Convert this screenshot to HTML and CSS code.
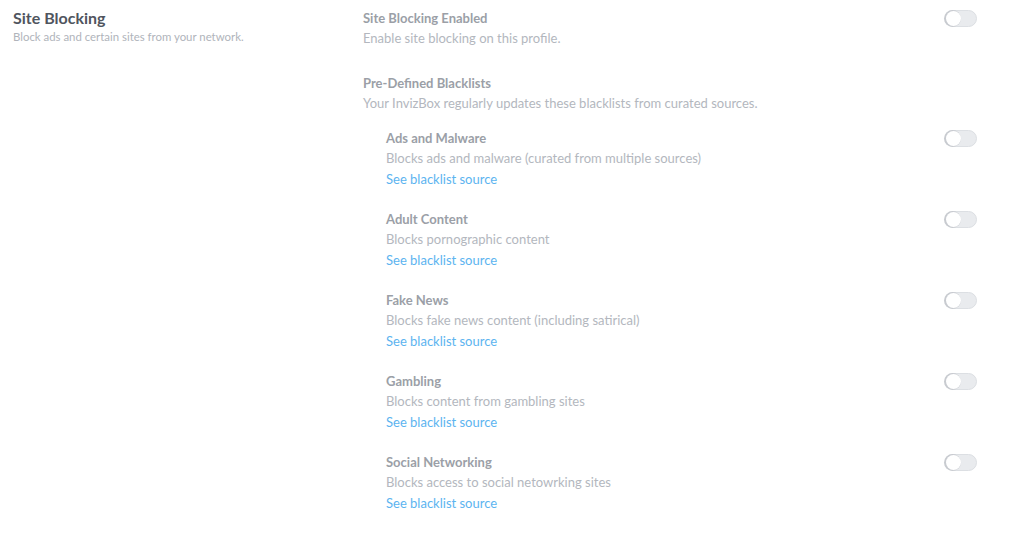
FILE: index.html
```html
<!DOCTYPE html>
<html lang="en">
<head>
  <meta charset="UTF-8">
  <title>Site Blocking</title>
  <link rel="stylesheet" href="styles.css">
</head>
<body>

  <div class="page">
    <div class="side">
      <h2>Site Blocking</h2>
      <p>Block ads and certain sites from your network.</p>
    </div>

    <div class="main">
      <div class="row">
        <div class="text">
          <h4>Site Blocking Enabled</h4>
          <p>Enable site blocking on this profile.</p>
        </div>
        <span class="toggle"></span>
      </div>

      <div class="group">
        <h4>Pre-Defined Blacklists</h4>
        <p>Your InvizBox regularly updates these blacklists from curated sources.</p>
      </div>

      <div class="lists">
        <div class="row item">
          <div class="text">
            <h4>Ads and Malware</h4>
            <p>Blocks ads and malware (curated from multiple sources)</p>
            <a href="#">See blacklist source</a>
          </div>
          <span class="toggle"></span>
        </div>
        <div class="row item">
          <div class="text">
            <h4>Adult Content</h4>
            <p>Blocks pornographic content</p>
            <a href="#">See blacklist source</a>
          </div>
          <span class="toggle"></span>
        </div>
        <div class="row item">
          <div class="text">
            <h4>Fake News</h4>
            <p>Blocks fake news content (including satirical)</p>
            <a href="#">See blacklist source</a>
          </div>
          <span class="toggle"></span>
        </div>
        <div class="row item">
          <div class="text">
            <h4>Gambling</h4>
            <p>Blocks content from gambling sites</p>
            <a href="#">See blacklist source</a>
          </div>
          <span class="toggle"></span>
        </div>
        <div class="row item">
          <div class="text">
            <h4>Social Networking</h4>
            <p>Blocks access to social netowrking sites</p>
            <a href="#">See blacklist source</a>
          </div>
          <span class="toggle"></span>
        </div>
      </div>
    </div>
  </div>

</body>
</html>
```

FILE: styles.css
```css
body { margin: 0; font-family: Lato, "Liberation Sans", sans-serif; background: #fff; }
h2, h4, p { margin: 0; }
.page { display: flex; padding: 8px 47px 0 13px; }
.side { width: 350px; }
.side h2 { font-size: 16px; font-weight: 700; color: #50555e; line-height: 20px; }
.side p { font-size: 11.4px; color: #b0b4bb; line-height: 18px; }
.main { flex: 1; }
.row { display: flex; justify-content: space-between; align-items: flex-start; }
.text h4 { font-size: 13px; font-weight: 700; color: #9b9fa7; line-height: 20px; }
.text p, .group p { font-size: 13px; color: #b3b7be; line-height: 20px; }
.group { margin-top: 25px; }
.group h4 { font-size: 13px; font-weight: 700; color: #9b9fa7; line-height: 20px; }
.lists { padding-left: 23px; margin-top: 15px; }
.item { margin-bottom: 20px; }
a { font-size: 13px; color: #5cb4f0; text-decoration: none; line-height: 20px; }
.toggle {
  width: 32px;
  height: 17px;
  border-radius: 9px;
  background: #e9ebee;
  border: 1px solid #dcdfe3;
  box-sizing: border-box;
  position: relative;
  margin-top: 2px;
}
.toggle::after {
  content: "";
  position: absolute;
  left: 0;
  top: 0;
  width: 15px;
  height: 15px;
  border-radius: 50%;
  background: #fff;
  box-shadow: -1px 0 0 1px #c8cbd0;
}
```
